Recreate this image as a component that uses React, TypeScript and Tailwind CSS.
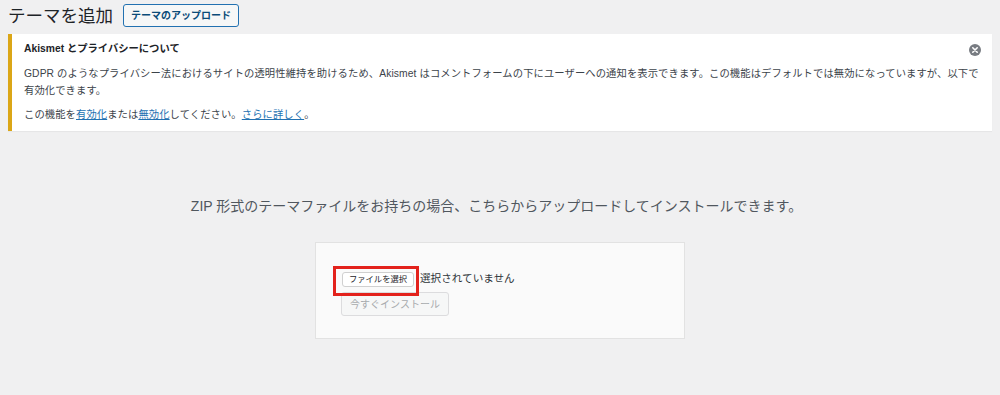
import React from "react";

export default function App() {
  const font = { fontFamily: '"Liberation Sans", "Noto Sans CJK JP", sans-serif' };
  return (
    <div className="min-h-[395px] w-[1000px] bg-[#f0f0f1] text-[#3c434a]" style={font}>
      <div className="flex items-center h-[31px] pt-[0px] pl-[8px]">
        <h1 className="text-[17.5px] leading-[22px] text-[#1d2327] font-normal">テーマを追加</h1>
        <button className="ml-[10px] h-[23px] px-[7px] rounded-[3px] border border-[#2271b1] bg-[#f6f7f7] text-[10px] font-bold text-[#0a4b78] leading-none">
          テーマのアップロード
        </button>
      </div>

      <div className="relative mx-[8px] mt-[3px] bg-white border-l-4 border-[#dba617] shadow-[0_1px_1px_rgba(0,0,0,0.04)] pl-[12px] pr-[12px] pt-[7px] pb-[8px]">
        <p className="text-[10.3px] leading-[16px] font-bold text-[#1d2327]">Akismet とプライバシーについて</p>
        <p className="mt-[8px] text-[10.3px] leading-[17px] text-[#3c434a] tracking-[0.1px]">
          <span className="block whitespace-nowrap">
            GDPR のようなプライバシー法におけるサイトの透明性維持を助けるため、Akismet はコメントフォームの下にユーザーへの通知を表示できます。この機能はデフォルトでは無効になっていますが、以下で
          </span>
          <span className="block">有効化できます。</span>
        </p>
        <p className="mt-[7px] text-[10.3px] leading-[17px] text-[#3c434a] tracking-[0.1px]">
          この機能を<a className="text-[#2271b1] underline">有効化</a>または<a className="text-[#2271b1] underline">無効化</a>してください。<a className="text-[#2271b1] underline">さらに詳しく</a>。
        </p>
        <svg className="absolute right-[11px] top-[10px]" width="12" height="12" viewBox="0 0 12 12">
          <circle cx="6" cy="6" r="6" fill="#787c82" />
          <path d="M3.8 3.8 L8.2 8.2 M8.2 3.8 L3.8 8.2" stroke="#fff" strokeWidth="1.6" strokeLinecap="round" />
        </svg>
      </div>

      <p className="mt-[65px] text-center text-[14px] leading-[20px] text-[#50575e] pr-[7px]">
        ZIP 形式のテーマファイルをお持ちの場合、こちらからアップロードしてインストールできます。
      </p>

      <div className="mx-auto mt-[26px] w-[370px] h-[97px] bg-[#fafafa] border border-[#e2e2e2] pl-[25px] pt-[25px]">
        <div className="relative flex items-center h-[22px]">
          <span className="inline-flex items-center justify-center h-[15px] w-[72px] ml-[1px] bg-white border border-[#d0d0d0] rounded-[3px] text-[8.3px] text-[#1d2327] leading-none">
            ファイルを選択
          </span>
          <span className="ml-[6px] text-[10.6px] text-[#2c3338]">選択されていません</span>
          <div className="absolute left-[-8px] top-[-2px] w-[86px] h-[30px] border-[3px] border-[#e3221c]" />
        </div>
        <div className="mt-[2px] w-[108px] h-[24px] border border-[#dcdcde] rounded-[3px] bg-[#f6f7f7] flex items-center justify-center text-[10px] text-[#a7aaad]">
          今すぐインストール
        </div>
      </div>
    </div>
  );
}
